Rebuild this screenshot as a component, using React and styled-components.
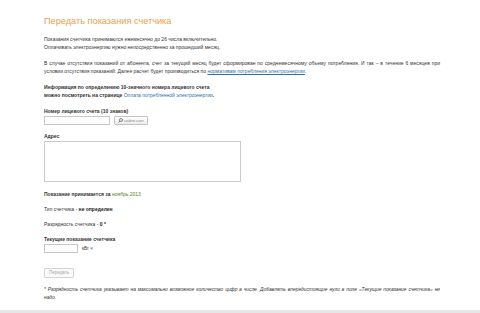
import styled, { createGlobalStyle } from "styled-components";

const GlobalStyle = createGlobalStyle`
  html, body {
    margin: 0;
    padding: 0;
    background: #ffffff;
  }
  body {
    font-family: "Liberation Sans", Arial, sans-serif;
    color: #333333;
  }
`;

const Page = styled.div`
  height: 313px;
  display: flex;
  flex-direction: column;
  box-sizing: border-box;
`;

const Content = styled.div`
  flex: 1;
  width: 396px;
  padding: 14px 0 0 44px;
  font-size: 5px;
  line-height: 8px;
`;

const Title = styled.h1`
  margin: 0 0 7px;
  font-size: 9.2px;
  line-height: 14px;
  font-weight: normal;
  color: #eda048;
`;

const Para = styled.p`
  margin: 0 0 8px;
  text-align: ${(p) => (p.justify ? "justify" : "left")};
  font-weight: ${(p) => (p.bold ? "bold" : "normal")};
`;

const Link = styled.a`
  color: #2f6fb5;
  text-decoration: ${(p) => (p.underline ? "underline" : "none")};
  font-weight: normal;
`;

const Label = styled.div`
  font-weight: bold;
  margin-bottom: 1px;
`;

const Field = styled.div`
  margin-bottom: ${(p) => p.gap || 0}px;
`;

const Row = styled.div`
  display: flex;
  align-items: center;
  gap: 4px;
  height: 9px;
`;

const TextInput = styled.input`
  box-sizing: border-box;
  width: ${(p) => p.w}px;
  height: 9px;
  border: 1px solid #c8c8c8;
  padding: 0;
  margin: 0;
  background: #fff;
`;

const SmallButton = styled.button`
  box-sizing: border-box;
  height: 9px;
  padding: 0 3px;
  display: flex;
  align-items: center;
  gap: 1px;
  border: 1px solid #c4c4c4;
  border-radius: 1px;
  background: linear-gradient(#ffffff, #ececec);
  font-family: inherit;
  font-size: 4px;
  color: #888;
`;

const Address = styled.textarea`
  box-sizing: border-box;
  display: block;
  width: 197px;
  height: 41px;
  margin: 0;
  border: 1px solid #cccccc;
  resize: none;
`;

const InfoLine = styled.div`
  margin-bottom: 7px;
  font-weight: ${(p) => (p.bold ? "bold" : "normal")};
`;

const Green = styled.span`
  color: #4a8a1c;
  font-weight: normal;
`;

const Strong = styled.b`
  color: #222;
`;

const Unit = styled.span`
  font-size: 4.5px;
`;

const SubmitButton = styled.button`
  display: block;
  box-sizing: border-box;
  height: 10px;
  padding: 0 4px;
  margin: 15px 0 8px;
  border: 1px solid #d4d4d4;
  border-radius: 1px;
  background: #fafafa;
  font-family: inherit;
  font-size: 4.5px;
  line-height: 8px;
  color: #a8a8a8;
`;

const Note = styled.p`
  margin: 0;
  font-size: 4.85px;
  font-style: italic;
  text-align: justify;
`;

const Footer = styled.div`
  height: 3px;
  background: #e6e6e6;
`;

const Magnifier = () => (
  <svg width="5" height="5" viewBox="0 0 10 10">
    <circle cx="6" cy="4" r="3" fill="none" stroke="#555" strokeWidth="1.4" />
    <line x1="4" y1="6" x2="1" y2="9" stroke="#555" strokeWidth="1.6" />
  </svg>
);

export default function App() {
  return (
    <Page>
      <GlobalStyle />
      <Content>
        <Title>Передать показания счетчика</Title>
        <Para>
          Показания счетчика принимаются ежемесячно до 26 числа включительно.
          <br />
          Оплачивать электроэнергию нужно непосредственно за прошедший месяц.
        </Para>
        <Para justify>
          В случае отсутствия показаний от абонента, счет за текущий месяц будет сформирован по
          среднемесячному объему потребления. И так – в течение 6 месяцев при условии отсутствия
          показаний. Далее расчет будет производиться по{" "}
          <Link underline>нормативам потребления электроэнергии</Link>.
        </Para>
        <Para bold>
          Информация по определению 10-значного номера лицевого счета
          <br />
          можно посмотреть на странице <Link>Оплата потребленной электроэнергии</Link>.
        </Para>
        <Field gap={7}>
          <Label>Номер лицевого счета (10 знаков)</Label>
          <Row>
            <TextInput w={66} />
            <SmallButton>
              <Magnifier />
              найти счет
            </SmallButton>
          </Row>
        </Field>
        <Field gap={8}>
          <Label>Адрес</Label>
          <Address />
        </Field>
        <InfoLine bold>
          Показание принимается за <Green>ноябрь 2013</Green>
        </InfoLine>
        <InfoLine>
          Тип счетчика - <Strong>не определен</Strong>
        </InfoLine>
        <InfoLine>
          Разрядность счетчика - <Strong>0 *</Strong>
        </InfoLine>
        <Field>
          <Label>Текущие показание счетчика</Label>
          <Row>
            <TextInput w={34} />
            <Unit>кВт ч</Unit>
          </Row>
        </Field>
        <SubmitButton disabled>Передать</SubmitButton>
        <Note>
          * Разрядность счетчика указывает на максимально возможное количество цифр в числе.
          Добавлять впередистоящие нули в поле «Текущие показание счетчика» не надо.
        </Note>
      </Content>
      <Footer />
    </Page>
  );
}
